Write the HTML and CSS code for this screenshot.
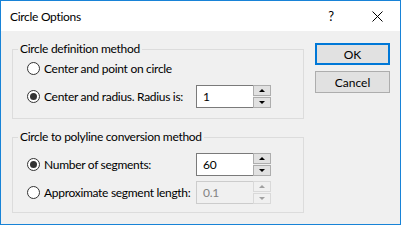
FILE: index.html
```html
<!DOCTYPE html>
<html lang="en">
<head>
  <meta charset="UTF-8">
  <title>Circle Options</title>
  <link rel="stylesheet" href="styles.css">
</head>
<body>

<div class="window">
  <!-- başlık çubuğu -->
  <div class="titlebar">
    <span class="title">Circle Options</span>
    <span class="tb-btn help">?</span>
    <span class="tb-btn close">
      <svg width="11" height="11" viewBox="0 0 11 11">
        <path d="M0.5 0.5 L10.5 10.5 M10.5 0.5 L0.5 10.5" stroke="#000" stroke-width="1" fill="none"/>
      </svg>
    </span>
  </div>

  <div class="content">
    <div class="groups">
      <fieldset class="group def">
        <legend>Circle definition method</legend>
        <div class="row">
          <label class="opt"><input type="radio" name="def">Center and point on circle</label>
        </div>
        <div class="row">
          <label class="opt"><input type="radio" name="def" checked>Center and radius. Radius is:</label>
          <div class="spin">
            <div class="field">1</div>
            <div class="arrows">
              <span class="arr up"></span>
              <span class="arr down"></span>
            </div>
          </div>
        </div>
      </fieldset>

      <fieldset class="group conv">
        <legend>Circle to polyline conversion method</legend>
        <div class="row">
          <label class="opt"><input type="radio" name="conv" checked>Number of segments:</label>
          <div class="spin">
            <div class="field">60</div>
            <div class="arrows">
              <span class="arr up"></span>
              <span class="arr down"></span>
            </div>
          </div>
        </div>
        <div class="row">
          <label class="opt"><input type="radio" name="conv">Approximate segment length:</label>
          <div class="spin disabled">
            <div class="field">0.1</div>
            <div class="arrows">
              <span class="arr up"></span>
              <span class="arr down"></span>
            </div>
          </div>
        </div>
      </fieldset>
    </div>

    <div class="buttons">
      <button class="btn default">OK</button>
      <button class="btn">Cancel</button>
    </div>
  </div>
</div>

</body>
</html>
```

FILE: styles.css
```css
* {
  box-sizing: border-box;
}

body {
  margin: 0;
  font-family: Lato, "Noto Sans", sans-serif;
  font-size: 12px;
  letter-spacing: -0.3px;
  color: #000;
}

.window {
  width: 401px;
  height: 225px;
  border: 1px solid #1883d7;
  background: #f0f0f0;
  display: flex;
  flex-direction: column;
}

.titlebar {
  height: 30px;
  background: #fff;
  display: flex;
  align-items: center;
}

.title {
  flex: 1;
  padding-left: 9px;
}

.tb-btn {
  width: 46px;
  height: 30px;
  display: flex;
  align-items: center;
  justify-content: center;
}

.help {
  font-size: 13px;
}

.content {
  flex: 1;
  display: flex;
  gap: 11px;
  padding: 10px 0 0 11px;
}

.groups {
  width: 292px;
  display: flex;
  flex-direction: column;
  gap: 10px;
}

.group {
  margin: 0;
  padding: 0 0 10px 14px;
  border: 1px solid #dcdcdc;
  min-width: 0;
}

.group.conv {
  padding-top: 8px;
  padding-bottom: 8px;
}

.group legend {
  margin-left: -9px;
  padding: 0 2px;
  line-height: 16px;
}

.row {
  display: grid;
  grid-template-columns: 169px 75px;
  align-items: center;
  height: 23px;
}

.row + .row {
  margin-top: 5px;
}

.opt {
  display: flex;
  align-items: center;
  gap: 4px;
  white-space: nowrap;
}

.opt input {
  appearance: none;
  flex-shrink: 0;
  margin: 0;
  width: 13px;
  height: 13px;
  border: 1px solid #333;
  border-radius: 50%;
  background: #fff;
  display: grid;
  place-content: center;
}

.opt input:checked::before {
  content: "";
  display: block;
  width: 7px;
  height: 7px;
  border-radius: 50%;
  background: #333;
}

.spin {
  display: flex;
  width: 75px;
  height: 23px;
}

.spin .field {
  width: 57px;
  border: 1px solid #7a7a7a;
  border-right: none;
  background: #fff;
  padding-left: 6px;
  line-height: 21px;
}

.spin .arrows {
  width: 18px;
  display: flex;
  flex-direction: column;
  gap: 1px;
}

.arr {
  height: 11px;
  border: 1px solid #adadad;
  background: #e1e1e1;
  display: flex;
  align-items: center;
  justify-content: center;
}

.arr::before {
  content: "";
  border-left: 3px solid transparent;
  border-right: 3px solid transparent;
}

.arr.up::before {
  border-bottom: 3px solid #000;
}

.arr.down::before {
  border-top: 3px solid #000;
}

.spin.disabled .field {
  border-color: #ccc;
  background: #f0f0f0;
  color: #838383;
}

.spin.disabled .arr {
  border-color: #d9d9d9;
  background: #f0f0f0;
}

.spin.disabled .arr.up::before {
  border-bottom-color: #a0a0a0;
}

.spin.disabled .arr.down::before {
  border-top-color: #a0a0a0;
}

.buttons {
  display: flex;
  flex-direction: column;
  gap: 6px;
  padding-top: 2px;
}

.btn {
  width: 75px;
  height: 22px;
  border: 1px solid #adadad;
  background: #e1e1e1;
  font: inherit;
  color: #000;
  padding: 0;
}

.btn.default {
  border: 2px solid #0078d7;
}
```
